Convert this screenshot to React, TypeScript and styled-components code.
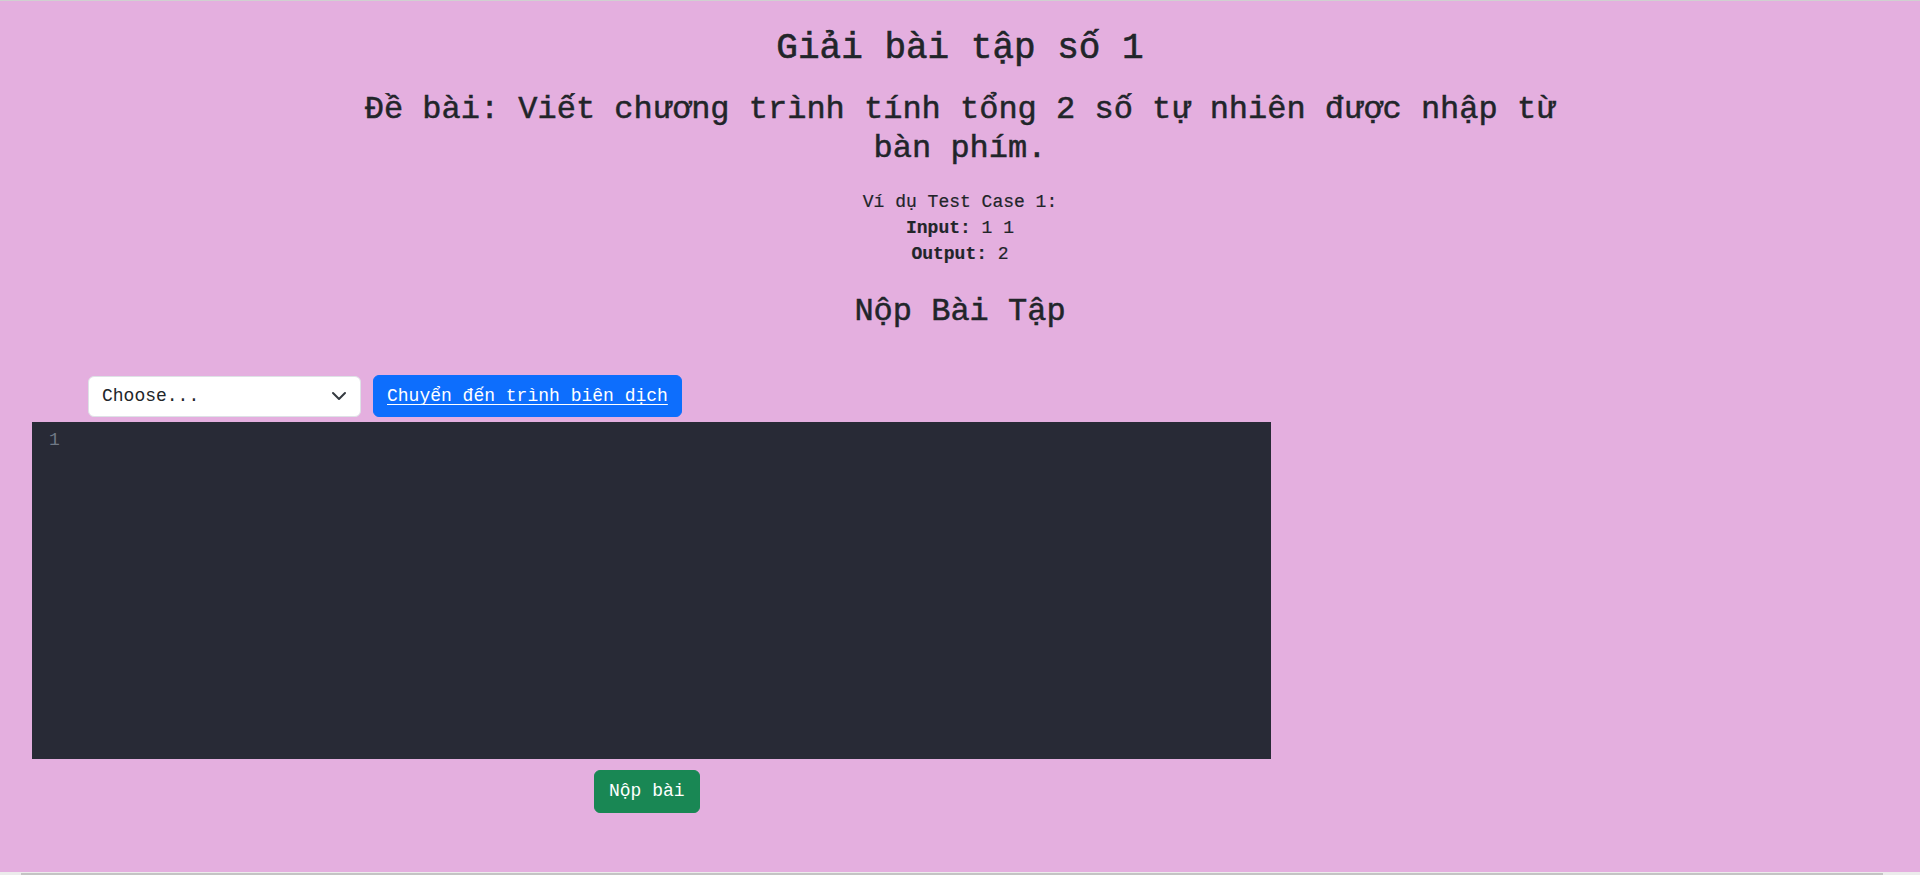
import React from "react";
import styled, { createGlobalStyle } from "styled-components";

const t = (s: string) => s.normalize("NFC");

const GlobalStyle = createGlobalStyle`
  html, body {
    margin: 0;
    padding: 0;
  }
  body {
    background: #e4afdf;
    color: #212529;
    font-family: "Liberation Mono", "DejaVu Sans Mono", monospace;
  }
  * { box-sizing: border-box; }
`;

const Page = styled.div`
  min-height: 100vh;
  display: flex;
  flex-direction: column;
  border-top: 1px solid #d0d0d0;
  background: #e4afdf;
`;

const Header = styled.header`
  display: flex;
  flex-direction: column;
  align-items: center;
  text-align: center;
`;

const Title = styled.h1`
  margin: 26px 0 0;
  font-size: 36px;
  line-height: 1.2;
  font-weight: 500;
  -webkit-text-stroke: 0.6px currentColor;
`;

const Problem = styled.h2`
  margin: 21px 0 0;
  max-width: 1240px;
  font-size: 32px;
  line-height: 1.2;
  font-weight: 500;
  -webkit-text-stroke: 0.5px currentColor;
`;

const TestCase = styled.div`
  margin-top: 21px;
  font-size: 18px;
  line-height: 26px;
  -webkit-text-stroke: 0.2px currentColor;
`;

const TestLine = styled.div``;

const Label = styled.b`
  font-weight: 700;
`;

const SectionTitle = styled.h2`
  margin: 26px 0 0;
  font-size: 32px;
  line-height: 1.2;
  font-weight: 500;
  -webkit-text-stroke: 0.5px currentColor;
`;

const Toolbar = styled.div`
  margin-top: 44px;
  padding-left: 88px;
  display: flex;
  align-items: center;
  gap: 12px;
  height: 42px;
`;

const SelectWrap = styled.div`
  position: relative;
  width: 273px;
  height: 41px;
`;

const Select = styled.select`
  appearance: none;
  -webkit-appearance: none;
  width: 100%;
  height: 100%;
  padding: 0 40px 0 13px;
  background: #ffffff;
  border: 1px solid #dee2e6;
  border-radius: 6px;
  color: #212529;
  font-family: inherit;
  font-size: 18px;
  outline: none;
`;

const Chevron = styled.svg`
  position: absolute;
  right: 14px;
  top: 50%;
  width: 16px;
  height: 16px;
  margin-top: -8px;
  pointer-events: none;
`;

const LinkButton = styled.a`
  display: inline-flex;
  align-items: center;
  height: 42px;
  padding: 0 13px;
  background: #0d6efd;
  border: 1px solid #0d6efd;
  border-radius: 6px;
  color: #ffffff;
  font-size: 18px;
  line-height: 28px;
  text-decoration: underline;
  text-underline-offset: 3px;
  cursor: pointer;
`;

const Editor = styled.div`
  margin: 5px 0 0 32px;
  width: 1239px;
  height: 337px;
  background: #282a36;
  display: flex;
  padding-top: 6px;
`;

const Gutter = styled.div`
  padding: 0 8px 0 17px;
  color: #6f7885;
  font-size: 18px;
  line-height: 25px;
`;

const CodeArea = styled.div`
  flex: 1;
  color: #f8f8f2;
  font-size: 18px;
  line-height: 25px;
`;

const ButtonRow = styled.div`
  margin-top: 11px;
  padding-left: 594px;
  display: flex;
`;

const SubmitButton = styled.button`
  padding: 7px 14px;
  background: #198754;
  border: 1px solid #198754;
  border-radius: 6px;
  color: #ffffff;
  font-family: inherit;
  font-size: 18px;
  line-height: 27px;
  cursor: pointer;
`;

const Spacer = styled.div`
  flex: 1;
`;

const ScrollTrack = styled.div`
  height: 3px;
  background: #ececec;
  padding: 1px 37px 0 21px;
`;

const ScrollThumb = styled.div`
  height: 2px;
  background: #c4c4c4;
`;

export default function App() {
  return (
    <>
      <GlobalStyle />
      <Page>
        <Header>
          <Title>{t("Giải bài tập s\u1ED1 1")}</Title>
          <Problem>
            {t(
              "Đ\u1EC1 bài: Vi\u1EBFt chương trình tính t\u1ED5ng 2 s\u1ED1 tự nhiên được nhập từ bàn phím."
            )}
          </Problem>
          <TestCase>
            <TestLine>{t("Ví dụ Test Case 1:")}</TestLine>
            <TestLine>
              <Label>Input:</Label> 1 1
            </TestLine>
            <TestLine>
              <Label>Output:</Label> 2
            </TestLine>
          </TestCase>
          <SectionTitle>{t("Nộp Bài Tập")}</SectionTitle>
        </Header>
        <Toolbar>
          <SelectWrap>
            <Select defaultValue="">
              <option value="">Choose...</option>
              <option value="c">C</option>
              <option value="cpp">C++</option>
              <option value="java">Java</option>
              <option value="python">Python</option>
            </Select>
            <Chevron viewBox="0 0 16 16" fill="none">
              <path
                d="m2 5 6 6 6-6"
                stroke="#343a40"
                strokeWidth="2"
                strokeLinecap="round"
                strokeLinejoin="round"
              />
            </Chevron>
          </SelectWrap>
          <LinkButton>{t("Chuy\u1EC3n đ\u1EBFn trình biên dịch")}</LinkButton>
        </Toolbar>
        <Editor>
          <Gutter>1</Gutter>
          <CodeArea />
        </Editor>
        <ButtonRow>
          <SubmitButton>{t("Nộp bài")}</SubmitButton>
        </ButtonRow>
        <Spacer />
        <ScrollTrack>
          <ScrollThumb />
        </ScrollTrack>
      </Page>
    </>
  );
}
